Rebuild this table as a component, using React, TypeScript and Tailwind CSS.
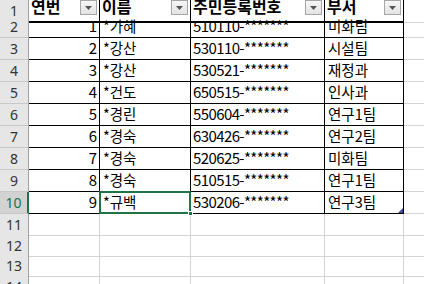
import React from "react";

const rows = [
  { no: 1, name: "*가혜", id: "510110-*******", dept: "미화팀" },
  { no: 2, name: "*강산", id: "530110-*******", dept: "시설팀" },
  { no: 3, name: "*강산", id: "530521-*******", dept: "재정과" },
  { no: 4, name: "*건도", id: "650515-*******", dept: "인사과" },
  { no: 5, name: "*경린", id: "550604-*******", dept: "연구1팀" },
  { no: 6, name: "*경숙", id: "630426-*******", dept: "연구2팀" },
  { no: 7, name: "*경숙", id: "520625-*******", dept: "미화팀" },
  { no: 8, name: "*경숙", id: "510515-*******", dept: "연구1팀" },
  { no: 9, name: "*규백", id: "530206-*******", dept: "연구3팀" },
];

const cols = "grid grid-cols-[29px_71px_91px_134px_79px_1fr]";

// little filter dropdown in the header cells
const FilterBtn = () => (
  <div className="absolute right-[2px] top-0 w-[17px] h-[15px] border border-[#a6a6a6] bg-gradient-to-b from-[#f7f7f7] to-[#e3e3e3] flex items-center justify-center">
    <svg width="7" height="4" viewBox="0 0 7 4">
      <path d="M0 0h7L3.5 4z" fill="#555" />
    </svg>
  </div>
);

const RowHead = ({ n, active }: { n: number; active?: boolean }) => (
  <div
    className={`flex items-center justify-center text-[14px] border-b border-[#c8c8c8] ${
      active
        ? "bg-[#d2d2d2] text-[#217346] border-r-2 border-r-[#217346]"
        : "bg-[#e6e6e6] text-[#333] border-r border-r-[#a0a0a0]"
    }`}
    style={{ fontFamily: '"Noto Sans", sans-serif' }}
  >
    {n}
  </div>
);

const App: React.FC = () => {
  return (
    <div
      className="w-[424px] h-[284px] overflow-hidden bg-white text-black text-[15px]"
      style={{ fontFamily: '"Noto Sans CJK KR", "Noto Sans", sans-serif' }}
    >
      {/* header row (row 1), scrolled so its top is cut */}
      <div className={`${cols} h-[16px]`}>
        <div className="flex items-center justify-center text-[14px] bg-[#e6e6e6] text-[#333] border-r border-[#a0a0a0] border-b-2 border-b-[#c8c8c8]" style={{ fontFamily: '"Noto Sans", sans-serif' }}>
          1
        </div>
        {["연번", "이름", "주민등록번호", "부서"].map((h) => (
          <div key={h} className="relative overflow-hidden border-r border-black border-b-2 border-b-black pl-[2px]">
            <div className="font-bold text-[16px] leading-[16px] -mt-[2px]">{h}</div>
            <FilterBtn />
          </div>
        ))}
        <div className="border-b border-[#d4d4d4]" />
      </div>

      {/* data rows */}
      {rows.map((r, i) => {
        const last = i === rows.length - 1;
        return (
          <div key={r.no} className={`${cols} h-[22px]`}>
            <RowHead n={r.no + 1} active={last} />
            <div className="flex items-end justify-end pr-[2px] pb-[1px] border-r border-b border-black leading-[20px]">
              {r.no}
            </div>
            <div className="relative flex items-end pl-[3px] pb-[1px] border-r border-b border-black leading-[20px] text-[14.5px]">
              {r.name}
              {last && (
                <>
                  <div className="absolute -left-[1px] -top-[1px] -right-[1px] -bottom-[1px] border-2 border-[#217346]" />
                  <div className="absolute -right-[3px] -bottom-[3px] w-[5px] h-[5px] bg-[#217346] border border-white" />
                </>
              )}
            </div>
            <div className="flex items-end pl-[2px] pb-[1px] border-r border-b border-black leading-[20px] tracking-[-0.6px]">
              {r.id}
            </div>
            <div className="relative flex items-end pl-[3px] pb-[1px] border-r border-b border-black leading-[20px] text-[14.5px]">
              {r.dept}
              {last && (
                <svg className="absolute right-0 bottom-0" width="5" height="5" viewBox="0 0 5 5">
                  <path d="M5 0V5H0z" fill="#3b4aa0" />
                </svg>
              )}
            </div>
            <div className="border-b border-[#d4d4d4]" />
          </div>
        );
      })}

      {/* empty rows */}
      {[11, 12, 13, 14].map((n) => (
        <div key={n} className={`${cols} ${n === 12 ? "h-[20px]" : "h-[21px]"}`}>
          <RowHead n={n} />
          <div className="border-r border-b border-[#d4d4d4]" />
          <div className="border-r border-b border-[#d4d4d4]" />
          <div className="border-r border-b border-[#d4d4d4]" />
          <div className="border-r border-b border-[#d4d4d4]" />
          <div className="border-b border-[#d4d4d4]" />
        </div>
      ))}
    </div>
  );
};

export default App;
